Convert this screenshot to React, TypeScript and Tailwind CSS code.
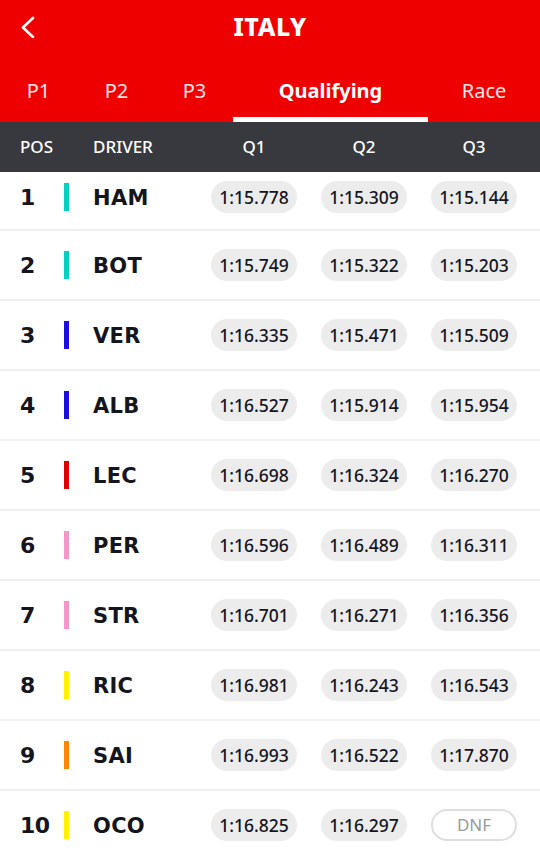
import { useState } from 'react'

type Row = {
  pos: number
  code: string
  color: string
  q1: string
  q2: string
  q3: string
}

const rows: Row[] = [
  { pos: 1, code: 'HAM', color: 'bg-[#00d2be]', q1: '1:15.778', q2: '1:15.309', q3: '1:15.144' },
  { pos: 2, code: 'BOT', color: 'bg-[#00d2be]', q1: '1:15.749', q2: '1:15.322', q3: '1:15.203' },
  { pos: 3, code: 'VER', color: 'bg-[#1a0fe0]', q1: '1:16.335', q2: '1:15.471', q3: '1:15.509' },
  { pos: 4, code: 'ALB', color: 'bg-[#1a0fe0]', q1: '1:16.527', q2: '1:15.914', q3: '1:15.954' },
  { pos: 5, code: 'LEC', color: 'bg-[#dc0000]', q1: '1:16.698', q2: '1:16.324', q3: '1:16.270' },
  { pos: 6, code: 'PER', color: 'bg-[#f596c8]', q1: '1:16.596', q2: '1:16.489', q3: '1:16.311' },
  { pos: 7, code: 'STR', color: 'bg-[#f596c8]', q1: '1:16.701', q2: '1:16.271', q3: '1:16.356' },
  { pos: 8, code: 'RIC', color: 'bg-[#fff200]', q1: '1:16.981', q2: '1:16.243', q3: '1:16.543' },
  { pos: 9, code: 'SAI', color: 'bg-[#ff8700]', q1: '1:16.993', q2: '1:16.522', q3: '1:17.870' },
  { pos: 10, code: 'OCO', color: 'bg-[#fff200]', q1: '1:16.825', q2: '1:16.297', q3: 'DNF' },
]

const tabs = [
  { label: 'P1', w: 'w-[77px]' },
  { label: 'P2', w: 'w-[79px]' },
  { label: 'P3', w: 'w-[77px]' },
  { label: 'Qualifying', w: 'w-[195px]' },
  { label: 'Race', w: 'flex-1' },
]

function TimePill({ value }: { value: string }) {
  if (value === 'DNF') {
    return (
      <div className="w-[86px] h-[32px] rounded-full border-2 border-[#dedede] bg-white flex items-center justify-center text-[17px] text-[#9a9a9a]">
        DNF
      </div>
    )
  }
  return (
    <div className="w-[86px] h-[32px] rounded-full bg-[#ececec] flex items-center justify-center text-[17.5px] font-medium text-[#15151e]">
      {value}
    </div>
  )
}

export default function App() {
  const [active, setActive] = useState('Qualifying')

  return (
    <div className="w-[540px] h-[854px] overflow-hidden bg-white font-['Noto_Sans',sans-serif]">
      <div className="bg-[#ee0000] text-white">
        <div className="relative h-[52px] flex items-center justify-center">
          <button className="absolute left-[20px] top-[16px]">
            <svg width="16" height="22" viewBox="0 0 16 22" fill="none">
              <polyline points="13,2 3,11.5 13,21" stroke="white" strokeWidth="2.6" strokeLinecap="round" strokeLinejoin="round" />
            </svg>
          </button>
          <div className="text-[25px] font-extrabold tracking-[0.5px] mt-[1px]">ITALY</div>
        </div>
        <div className="h-[70px] flex">
          {tabs.map((t) => (
            <button
              key={t.label}
              onClick={() => setActive(t.label)}
              className={`${t.w} flex flex-col items-center justify-end`}
            >
              <span
                className={`text-[20px] leading-none mb-[16px] ${
                  active === t.label ? 'font-bold' : 'font-normal text-white/90'
                }`}
              >
                {t.label}
              </span>
              <span className={`w-full h-[5px] ${active === t.label ? 'bg-white' : 'bg-transparent'}`} />
            </button>
          ))}
        </div>
      </div>

      <div className="h-[50px] bg-[#38383f] text-white text-[17px] font-medium flex items-center">
        <div className="pl-[20px] w-[93px]">POS</div>
        <div className="w-[118px]">DRIVER</div>
        <div className="flex gap-[24px]">
          <div className="w-[86px] text-center">Q1</div>
          <div className="w-[86px] text-center">Q2</div>
          <div className="w-[86px] text-center">Q3</div>
        </div>
      </div>

      <div>
        {rows.map((r, i) => (
          <div
            key={r.pos}
            className={`flex items-center border-b-2 border-[#efefef] ${i === 0 ? 'h-[59px] pb-[7px]' : 'h-[70px]'}`}
          >
            <div className="pl-[20px] w-[64px] font-['DejaVu_Sans',sans-serif] font-bold text-[22px] leading-none text-[#15151e] tracking-[-0.5px] mt-[2px]">
              {r.pos}
            </div>
            <div className={`w-[5px] h-[28px] ${r.color}`} />
            <div className="ml-[24px] w-[118px] font-['DejaVu_Sans',sans-serif] font-bold text-[21px] leading-none text-[#15151e] tracking-[0.3px] mt-[2px]">
              {r.code}
            </div>
            <div className="flex gap-[24px]">
              <TimePill value={r.q1} />
              <TimePill value={r.q2} />
              <TimePill value={r.q3} />
            </div>
          </div>
        ))}
      </div>
    </div>
  )
}
